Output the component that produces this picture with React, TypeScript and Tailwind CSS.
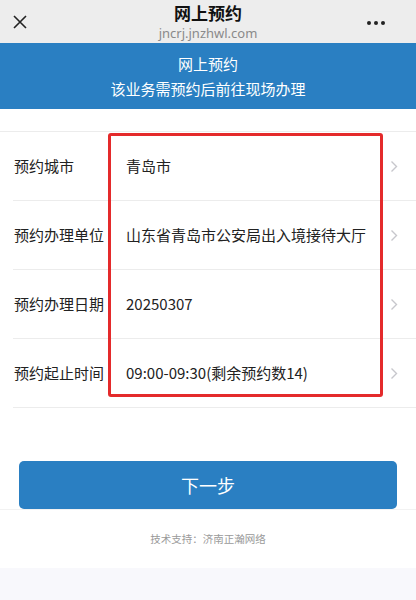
import React from "react";

const font = { fontFamily: '"Noto Sans CJK SC", "Noto Sans", sans-serif' };

function Chevron() {
  return (
    <svg width="8" height="13" viewBox="0 0 8 13" className="shrink-0">
      <path d="M1.5 1.5 L6.5 6.5 L1.5 11.5" fill="none" stroke="#c7c7cc" strokeWidth="1.4" />
    </svg>
  );
}

const rows = [
  ["预约城市", "青岛市"],
  ["预约办理单位", "山东省青岛市公安局出入境接待大厅"],
  ["预约办理日期", "20250307"],
  ["预约起止时间", "09:00-09:30(剩余预约数14)"],
];

export default function App() {
  return (
    <div className="w-[416px] h-[600px] bg-white flex flex-col overflow-hidden" style={font}>
      {/* top nav */}
      <div className="h-[43px] bg-[#ededed] flex items-center px-[12px] shrink-0">
        <div className="w-[40px] flex items-center">
          <svg width="16" height="16" viewBox="0 0 16 16">
            <path d="M2 2 L14 14 M14 2 L2 14" stroke="#222" strokeWidth="1.6" />
          </svg>
        </div>
        <div className="flex-1 flex flex-col items-center">
          <div className="text-[17px] leading-[20px] font-semibold text-[#111]">网上预约</div>
          <div className="text-[13px] leading-[16px] text-[#8a8a8a] mt-[2px]" style={{ fontFamily: '"Noto Sans", sans-serif' }}>jncrj.jnzhwl.com</div>
        </div>
        <div className="w-[40px] flex items-center justify-end gap-[3px] pr-[19px] pt-[2px]">
          <span className="w-[4px] h-[4px] rounded-full bg-[#222] shrink-0" />
          <span className="w-[4px] h-[4px] rounded-full bg-[#222] shrink-0" />
          <span className="w-[4px] h-[4px] rounded-full bg-[#222] shrink-0" />
        </div>
      </div>

      {/* banner */}
      <div className="h-[66px] bg-[#2a7fc2] flex flex-col items-center justify-center text-white text-[15px] leading-[25px] shrink-0">
        <div>网上预约</div>
        <div>该业务需预约后前往现场办理</div>
      </div>

      {/* form */}
      <div className="relative mt-[22px] border-t border-[#ececec]">
        {rows.map(([label, value]) => (
          <div key={label} className="h-[69px] ml-[13px] border-b border-[#ececec] flex items-center">
            <div className="w-[113px] text-[15px] text-[#222] shrink-0 pl-[1px]">{label}</div>
            <div className="flex-1 text-[15px] text-[#222] whitespace-nowrap">{value}</div>
            <div className="w-[28px] flex justify-start pl-[2px]">
              <Chevron />
            </div>
          </div>
        ))}
        <div className="absolute left-[108px] top-[1px] w-[275px] h-[264px] border-[3px] border-[#e42a2b] rounded-[3px] pointer-events-none" />
      </div>

      {/* button */}
      <div className="mt-[53px] px-[19px] border-b border-[#f2f2f2]">
        <div className="h-[48px] rounded-[5px] bg-[#2a7fc2] flex items-center justify-center text-white text-[18px]">下一步</div>
      </div>

      <div className="h-[58px] flex items-center justify-center text-[10.5px] text-[#9a9a9a]">技术支持：济南正瀚网络</div>

      <div className="flex-1 bg-[#f8f8fc]" />
    </div>
  );
}
